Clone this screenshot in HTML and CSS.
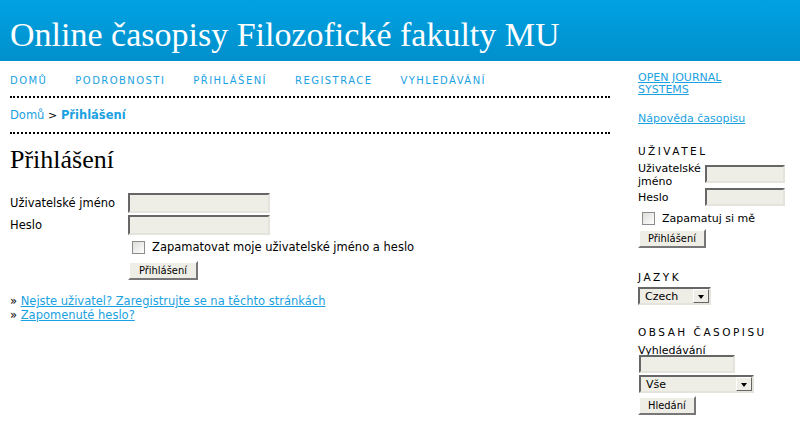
FILE: index.html
```html
<!DOCTYPE html>
<html lang="cs">
<head>
<meta charset="utf-8">
<title>Přihlášení</title>
<link rel="stylesheet" href="styles.css">
</head>
<body>
<div class="header"><h1>Online časopisy Filozofické fakulty MU</h1></div>
<div class="body">
  <div class="main">
    <ul class="nav">
      <li><a href="#">Domů</a></li>
      <li><a href="#">Podrobnosti</a></li>
      <li><a href="#">Přihlášení</a></li>
      <li><a href="#">Registrace</a></li>
      <li><a href="#">Vyhledávání</a></li>
    </ul>
    <div class="crumbs"><a href="#">Domů</a> <span class="sep">&gt;</span> <a href="#" class="current">Přihlášení</a></div>
    <h2 class="title">Přihlášení</h2>
    <form class="login">
      <div class="row"><label>Uživatelské jméno</label><input type="text" class="field"></div>
      <div class="row"><label>Heslo</label><input type="password" class="field"></div>
      <div class="row indent checkrow"><span class="check"></span><span class="checklabel">Zapamatovat moje uživatelské jméno a heslo</span></div>
      <div class="row indent btnrow"><button type="button" class="btn">Přihlášení</button></div>
    </form>
    <ul class="links">
      <li>» <a href="#">Nejste uživatel? Zaregistrujte se na těchto stránkách</a></li>
      <li>» <a href="#">Zapomenuté heslo?</a></li>
    </ul>
  </div>
  <div class="sidebar">
    <a href="#" class="ojs">OPEN JOURNAL SYSTEMS</a>
    <a href="#" class="help">Nápověda časopisu</a>
    <div class="block">
      <div class="btitle">Uživatel</div>
      <div class="srow srow1"><span class="slabel">Uživatelské jméno</span><input type="text" class="field sfield"></div>
      <div class="srow"><span class="slabel">Heslo</span><input type="password" class="field sfield"></div>
      <div class="srow scheck"><span class="check"></span><span class="checklabel">Zapamatuj si mě</span></div>
      <button type="button" class="btn small">Přihlášení</button>
    </div>
    <div class="block block2">
      <div class="btitle">Jazyk</div>
      <div class="select lang"><span>Czech</span><span class="arrow"></span></div>
    </div>
    <div class="block block3">
      <div class="btitle">Obsah časopisu</div>
      <div class="slabel2">Vyhledávání</div>
      <input type="text" class="field search">
      <div class="select all"><span>Vše</span><span class="arrow"></span></div>
      <button type="button" class="btn small">Hledání</button>
    </div>
  </div>
</div>
</body>
</html>
```
FILE: styles.css
```css
* { box-sizing: border-box; }
html, body { margin: 0; padding: 0; background: #fff; }
body { font-family: "DejaVu Sans", Verdana, sans-serif; font-size: 11.5px; color: #000; width: 800px; height: 440px; overflow: hidden; }
a { color: #1aa1e1; }
.header { height: 61px; background: linear-gradient(#01a2e2, #008fcc); padding: 15px 0 0 10px; }
.header h1 { margin: 0; font-family: "Liberation Serif", "Times New Roman", serif; font-weight: normal; font-size: 34px; color: #fff; line-height: 40px; white-space: nowrap; }
.body { display: flex; }
.main { width: 610px; padding-left: 10px; }
.nav { list-style: none; margin: 0; padding: 12px 0 9px; display: flex; gap: 28px; border-bottom: 2px dotted #000; }
.nav a { text-decoration: none; text-transform: uppercase; font-size: 10px; letter-spacing: 1.45px; line-height: 13px; }
.crumbs { padding: 10px 0 9px; border-bottom: 2px dotted #000; font-size: 11.5px; line-height: 15px; }
.crumbs a { text-decoration: none; }
.crumbs .current { font-weight: bold; }
.crumbs .sep { font-size: 11px; }
.title { margin: 11px 0 18px; font-family: "Liberation Serif", "Times New Roman", serif; font-weight: normal; font-size: 26px; line-height: 30px; }
.login .row { display: flex; align-items: center; margin-bottom: 2px; }
.login label { width: 118px; }
.field { width: 142px; height: 20px; background: #efeee6; border: 2px solid; border-color: #666 #e4e3dc #e4e3dc #666; padding: 0; margin: 0; }
.login .indent { padding-left: 118px; }
.login .checkrow { margin-top: 5px; }
.login .btnrow { margin-top: 7px; }
.check { display: inline-block; flex: none; width: 13px; height: 13px; border: 1px solid #8c8c8c; background: linear-gradient(135deg, #dcdcd8, #fff); margin: 0 7px 0 4px; }
.btn { font-family: "DejaVu Sans Condensed", Tahoma, sans-serif; font-size: 11px; background: #efeee6; border: 2px solid; border-color: #fff #777 #777 #fff; padding: 0 9px; height: 19px; line-height: 14px; color: #000; }
.links { list-style: none; margin: 14px 0 0; padding: 0; font-size: 11.5px; line-height: 14px; }
.sidebar { width: 160px; margin-left: 28px; padding-top: 11px; }
.ojs { display: block; width: 100px; font-size: 11px; line-height: 12px; }
.help { display: block; margin-top: 16px; font-size: 11px; }
.block { margin-top: 20px; font-size: 11px; }
.btitle { text-transform: uppercase; letter-spacing: 2.5px; font-size: 10.5px; margin-bottom: 5px; }
.srow { display: flex; align-items: center; }
.srow1 { align-items: flex-start; }
.srow1 .sfield { margin-top: 3px; }
.slabel { width: 67px; line-height: 13px; }
.sfield { width: 80px; height: 18px; }
.scheck { margin-top: 6px; margin-bottom: 4px; }
.btn.small { padding: 0 8px; }
.select { display: flex; align-items: center; justify-content: space-between; background: #efeee6; border: 2px solid; border-color: #666 #e4e3dc #e4e3dc #666; height: 18px; padding-left: 5px; font-size: 11px; }
.lang { width: 73px; }
.all { width: 115px; margin: 2px 0 3px 1px; }
.arrow { width: 16px; height: 14px; border: 1px solid; border-color: #fff #666 #666 #fff; background: #efeee6; position: relative; }
.arrow::after { content: ""; position: absolute; left: 4px; top: 5px; border: 3px solid transparent; border-top: 4px solid #000; }
.block2 { margin-top: 23px; }
.block2 .btitle { margin-bottom: 4px; }
.block3 { margin-top: 21px; }
.block3 .btitle { margin-bottom: 6px; }
.slabel2 { line-height: 13px; margin-bottom: -2px; }
.search { width: 96px; height: 18px; margin-left: 1px; }
```
